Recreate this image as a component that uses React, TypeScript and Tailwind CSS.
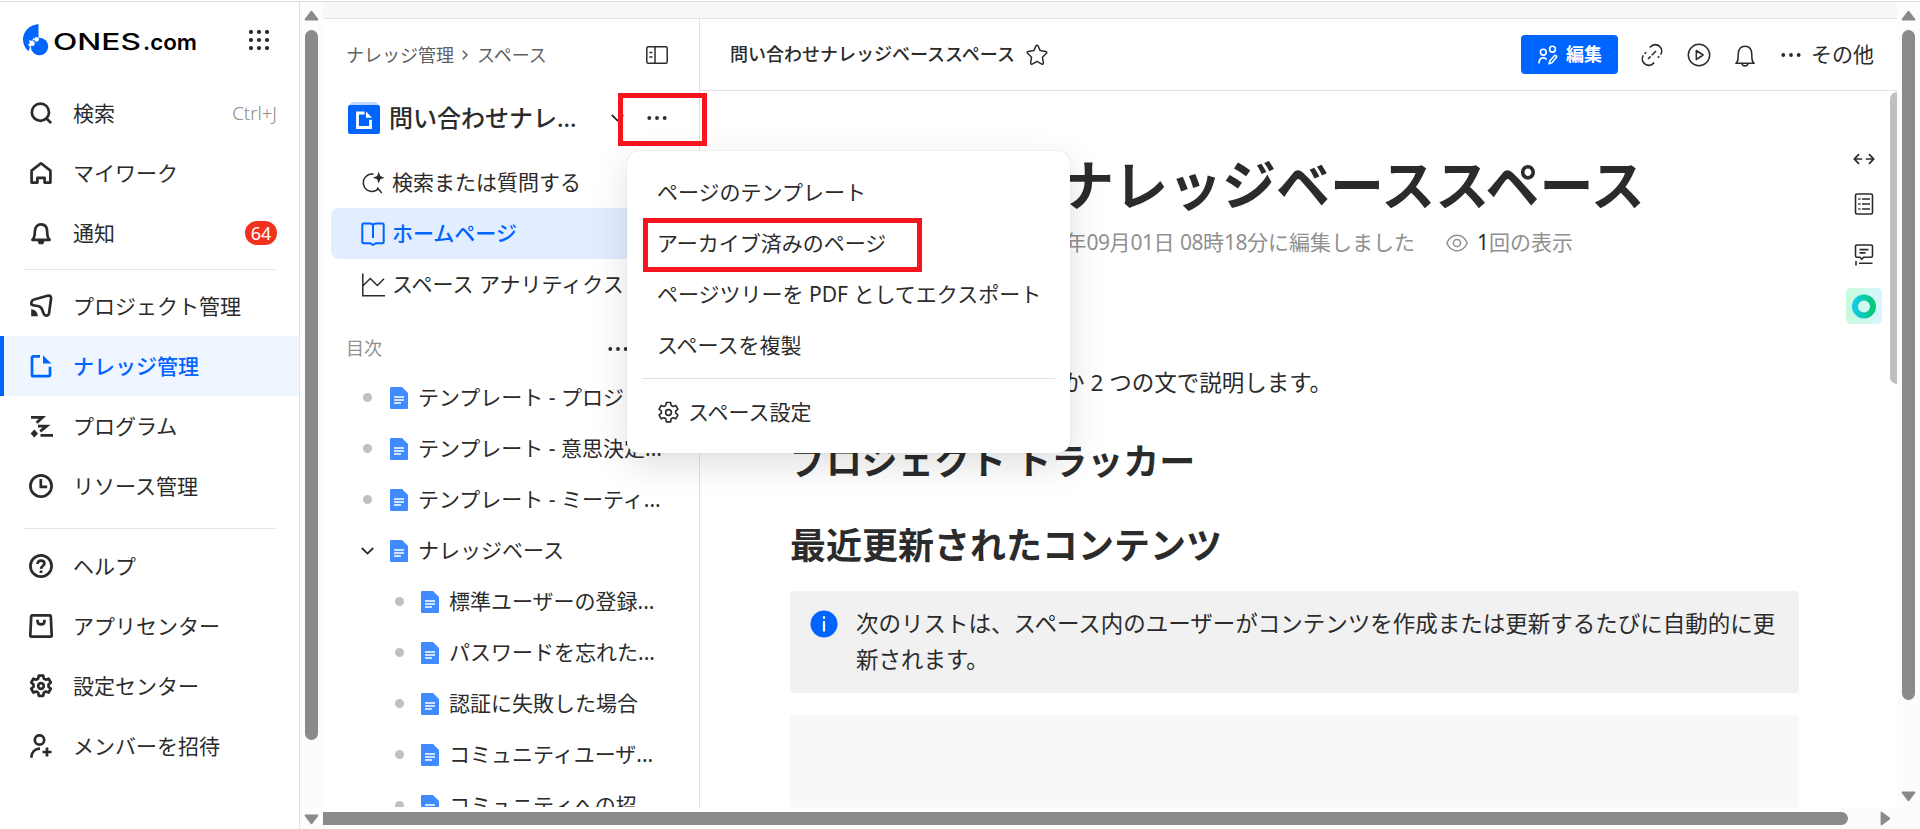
import type { ReactNode } from "react";

type IconProps = { className?: string; children: ReactNode; sw?: number; box?: number };

function Icon({ className = "size-6", children, sw = 2.7, box = 24 }: IconProps) {
  return (
    <svg
      viewBox={`0 0 ${box} ${box}`}
      className={`${className} shrink-0`}
      fill="none"
      stroke="currentColor"
      strokeWidth={sw}
      strokeLinejoin="round"
    >
      {children}
    </svg>
  );
}

const GEAR =
  "M9.8 1.6h4.4l.6 3 1.9 1.1 2.9-1 2.2 3.8-2.3 2v2.2l2.3 2-2.2 3.8-2.9-1-1.9 1.1-.6 3.2H9.8l-.6-3.2-1.9-1.1-2.9 1-2.2-3.8 2.3-2v-2.2l-2.3-2 2.2-3.8 2.9 1 1.9-1.1z";

const icons = {
  search: (
    <Icon>
      <circle cx="11.4" cy="11.2" r="8.6" />
      <path d="M17.3 17.3l4.8 4.8" />
    </Icon>
  ),
  home: (
    <Icon>
      <path d="M2.600 9.600L12 2.300l9.400 7.300V21.600h-5.800v-4.800H8.400v4.800H2.600z" />
    </Icon>
  ),
  bell: (
    <Icon>
      <path d="M3.4 18.8c1.8-1.6 2.4-3.6 2.4-7.8 0-5 2.6-7.6 6.2-7.6s6.2 2.6 6.2 7.6c0 4.200.6 6.200 2.400 7.800z" />
      <path d="M8.200 19.500h7.600l-1.700 3.700h-4.200z" fill="currentColor" stroke="none" />
    </Icon>
  ),
  project: (
    <Icon>
      <path d="M2.400 10.400C2 6.500 3.500 5.800 6 5.300l12.500-3.500c2.800-.6 3.800.8 3.500 3.200L20 19.500c-.6 2.600-3.400 3-5 .7-1.500-2.700-1.500-6-4-7.400-2.300-1.600-6.300-.5-8.600-2.400z" />
      <path d="M2.200 15.200c3.800 0 6.400 3 6.600 7H2.200z" fill="currentColor" stroke="none" />
    </Icon>
  ),
  knowledge: (
    <Icon>
      <path d="M11 2.400H4.200a1.200 1.200 0 0 0-1.200 1.200v17.400a1.200 1.200 0 0 0 1.200 1.200h15.600a1.200 1.200 0 0 0 1.200-1.200V12.800" strokeLinejoin="miter" />
      <path d="M14 1.200l8.300 8.200H14z" fill="currentColor" stroke="none" />
    </Icon>
  ),
  program: (
    <Icon sw={2.800}>
      <path d="M2 3.400h11.500L7.600 8.800M9 12.200h8.600l-6.400 5.200M11.500 21.400H24" strokeLinejoin="miter" />
      <path d="M5.300 15.600l3.700 3.900-3.700 3.900-3.700-3.900z" fill="currentColor" stroke="none" />
    </Icon>
  ),
  clock: (
    <Icon>
      <circle cx="12" cy="12" r="10.600" />
      <path d="M11.800 5v7.800h6.400" strokeLinejoin="miter" />
    </Icon>
  ),
  help: (
    <Icon>
      <circle cx="12" cy="12" r="10.600" />
      <path d="M8.600 10c0-2.200 1.400-3.400 3.400-3.400s3.400 1.200 3.400 3c0 2.400-3.200 2.400-3.400 5.200M12 16.500v2.600" />
    </Icon>
  ),
  apps: (
    <Icon>
      <path d="M3.200 1.400h17.600a1 1 0 0 1 1 1l.9 19.200a1 1 0 0 1-1 1H2.300a1 1 0 0 1-1-1l.9-19.200a1 1 0 0 1 1-1z" />
      <path d="M8.600 5.800v1.400c0 4.200 6.800 4.200 6.800 0V5.800" />
    </Icon>
  ),
  settings: (
    <Icon>
      <path d={GEAR} />
      <circle cx="12" cy="12" r="2.800" />
    </Icon>
  ),
  invite: (
    <Icon>
      <circle cx="10.500" cy="6" r="4.700" />
      <path d="M2.400 23.800c0-5 3-9 8.600-9.200M13.500 18h9M18 13.500v9" />
    </Icon>
  ),
};

type NavItem = { icon: ReactNode; label: string; active?: boolean; extra?: ReactNode };

function NavRow({ icon, label, active, extra }: NavItem) {
  return (
    <div
      className={
        active
          ? "flex h-[60px] items-center border-l-4 border-[#0064ff] bg-[#f0f6ff] pr-[22px] pl-[25px] font-medium text-[#0064ff]"
          : "flex h-[60px] items-center pr-[22px] pl-[29px] text-[#2b2b2b]"
      }
    >
      {icon}
      <span className="mb-px ml-5 flex-1 whitespace-nowrap text-[21px] leading-[30px]">{label}</span>
      {extra}
    </div>
  );
}

function Logo() {
  return (
    <svg viewBox="0 0 176 34" className="h-[34px] w-[176px]">
      <path
        d="M16.500 2C7 3 1 10 1 17.500c0 4.500 1.800 8.500 5.500 11.700l1.500-4.200-2.200-2.400 2-1.200-.6-3.400 2.900 1.100 1.300-3.400 2 2.300 3.100-1.800z"
        fill="#0064ff"
      />
      <circle cx="17.500" cy="24.500" r="8.700" fill="#0064ff" />
      <circle cx="10.200" cy="21.500" r="2.500" fill="#fff" />
      <circle cx="14.600" cy="17.400" r="2.300" fill="#fff" />
      <text x="31" y="28" fontFamily="Inter" fontWeight="500" fontSize="23" textLength="88" lengthAdjust="spacingAndGlyphs">
        ONES
      </text>
      <text x="121" y="28" fontFamily="Inter" fontWeight="600" fontSize="22" textLength="54" lengthAdjust="spacingAndGlyphs">
        .com
      </text>
    </svg>
  );
}

function Sidebar() {
  const top: NavItem[] = [
    {
      icon: icons.search,
      label: "検索",
      extra: <span className="text-[18.500px] font-light text-[#8a8a8a]">Ctrl+J</span>,
    },
    { icon: icons.home, label: "マイワーク" },
    {
      icon: icons.bell,
      label: "通知",
      extra: (
        <span className="flex h-6 w-8 items-center justify-center rounded-full bg-[#f0321e] text-[18px] leading-none text-white">
          64
        </span>
      ),
    },
  ];
  const middle: NavItem[] = [
    { icon: icons.project, label: "プロジェクト管理" },
    { icon: icons.knowledge, label: "ナレッジ管理", active: true },
    { icon: icons.program, label: "プログラム" },
    { icon: icons.clock, label: "リソース管理" },
  ];
  const bottom: NavItem[] = [
    { icon: icons.help, label: "ヘルプ" },
    { icon: icons.apps, label: "アプリセンター" },
    { icon: icons.settings, label: "設定センター" },
    { icon: icons.invite, label: "メンバーを招待" },
  ];
  return (
    <aside className="flex w-[300px] shrink-0 flex-col border-r border-[#dee1e6]">
      <div className="flex h-[81px] items-start justify-between pt-5 pr-[30px] pl-[22px]">
        <Logo />
        <svg viewBox="0 0 20 20" className="mt-[8px] size-5" fill="#2b2b2b">
          {[2, 10, 18].map((y) => [2, 10, 18].map((x) => <circle key={`${x}-${y}`} cx={x} cy={y} r="2.100" />))}
        </svg>
      </div>
      {top.map((i) => (
        <NavRow key={i.label} {...i} />
      ))}
      <div className="mx-[23px] mt-[6px] mb-[6px] h-px shrink-0 bg-[#e4e6e9]" />
      {middle.map((i) => (
        <NavRow key={i.label} {...i} />
      ))}
      <div className="mx-[23px] mt-3 mb-[7px] h-px shrink-0 bg-[#e4e6e9]" />
      {bottom.map((i) => (
        <NavRow key={i.label} {...i} />
      ))}
    </aside>
  );
}

function Arrow({ className }: { className: string }) {
  return (
    <svg viewBox="0 0 15 11" className={`h-[11px] w-[15px] ${className}`}>
      <path d="M7.500 1.500L13.600 9.600H1.400z" fill="#8a8a8a" stroke="#8a8a8a" strokeWidth="1.600" strokeLinejoin="round" />
    </svg>
  );
}

function DocIcon() {
  return (
    <svg viewBox="0 0 18 22" className="h-[22px] w-[18px] shrink-0">
      <path d="M1 0h11l6 6v15a1 1 0 0 1-1 1H1a1 1 0 0 1-1-1V1a1 1 0 0 1 1-1z" fill="#3f8bff" />
      <path d="M4 10h10M4 13h10M4 16h7" stroke="#fff" strokeWidth="1.300" />
    </svg>
  );
}

function Dots({ className }: { className?: string }) {
  return (
    <svg viewBox="0 0 20 6" className={`h-[6px] w-5 shrink-0 ${className ?? ""}`} fill="#2b2b2b">
      <circle cx="2.300" cy="3" r="1.900" />
      <circle cx="10" cy="3" r="1.900" />
      <circle cx="17.700" cy="3" r="1.900" />
    </svg>
  );
}

function Chevron() {
  return (
    <svg viewBox="0 0 13 8" className="h-2 w-[13px] shrink-0" fill="none" stroke="#2b2b2b" strokeWidth="1.800">
      <path d="M.8 1l5.700 5.600L12.200 1" />
    </svg>
  );
}

const tree = [
  { label: "テンプレート - プロジェ...", depth: 0 },
  { label: "テンプレート - 意思決定...", depth: 0 },
  { label: "テンプレート - ミーティ...", depth: 0 },
  { label: "ナレッジベース", depth: 0, open: true },
  { label: "標準ユーザーの登録...", depth: 1 },
  { label: "パスワードを忘れた...", depth: 1 },
  { label: "認証に失敗した場合", depth: 1 },
  { label: "コミュニティユーザ...", depth: 1 },
  { label: "コミュニティへの招...", depth: 1 },
];

function SpacePanel() {
  return (
    <section className="flex w-[377px] shrink-0 flex-col overflow-hidden border-r border-[#dee1e6]">
      <div className="flex h-[72px] shrink-0 items-center pr-[31px] pl-[23px] text-[18px] text-[#606060]">
        <span>ナレッジ管理</span>
        <svg viewBox="0 0 6 10" className="mr-[9px] ml-2 h-[10px] w-[6px]" fill="none" stroke="#606060" strokeWidth="1.500">
          <path d="M.8.8L5 5 .8 9.200" />
        </svg>
        <span>スペース</span>
        <svg viewBox="0 0 22 18" className="ml-auto h-[18px] w-[22px]" fill="none" stroke="#2b2b2b" strokeWidth="1.500">
          <rect x=".8" y=".8" width="20.400" height="16.400" rx="1.500" />
          <path d="M9 1v16M3.400 6.500h3M3.400 11h3" />
        </svg>
      </div>
      <div className="flex h-[53px] shrink-0 items-center pr-8 pl-[25px] text-[24px] font-medium text-[#2b2b2b]">
        <svg viewBox="0 0 32 32" className="size-8 shrink-0">
          <path d="M4 0h24l3 4H1z" fill="#bcd8ff" />
          <rect y="3" width="32" height="29" rx="2" fill="#0064ff" />
          <path d="M16.500 11H9.500v14.500h13v-7.800" fill="none" stroke="#fff" strokeWidth="2.800" />
          <path d="M18 9.500l6 6.300h-6z" fill="#fff" />
        </svg>
        <span className="ml-[9px] whitespace-nowrap">問い合わせナレ...</span>
        <span className="ml-auto flex items-center gap-[23px]">
          <Chevron />
          <Dots />
        </span>
      </div>
      <div className="mt-[13px] flex shrink-0 flex-col pl-2 text-[21px] text-[#2b2b2b]">
        <div className="flex h-[51px] items-center gap-[7px] pl-[30px]">
          <svg viewBox="0 0 24 24" className="size-6 shrink-0" fill="none" stroke="currentColor" strokeWidth="1.500">
            <path d="M12.500 3.100a8.700 8.700 0 1 0 5.200 14.200M16.200 16.600l4.600 5.400" />
            <path d="M17.700.8l1.600 4.300 4.200 1.600-4.200 1.600-1.600 4.300-1.600-4.300-4.200-1.600 4.200-1.600z" fill="currentColor" stroke="none" />
          </svg>
          <span className="whitespace-nowrap">検索または質問する</span>
        </div>
        <div className="flex h-[51px] items-center gap-[7px] rounded-l-lg bg-[#e2edff] pl-[30px] font-medium text-[#0064ff]">
          <svg viewBox="0 0 24 24" className="size-6 shrink-0" fill="none" stroke="currentColor" strokeWidth="2" strokeLinejoin="round">
            <path d="M2.500 1.500h6.300c1.500 0 2.700.7 3.200 1.700.5-1 1.700-1.700 3.200-1.700h6.300a1.200 1.200 0 0 1 1.200 1.200V20a1.200 1.200 0 0 1-1.200 1.200h-6.500L12 23l-3-1.800H2.500A1.200 1.200 0 0 1 1.300 20V2.700a1.200 1.200 0 0 1 1.200-1.200zM12 3v13" />
          </svg>
          <span className="whitespace-nowrap">ホームページ</span>
        </div>
        <div className="flex h-[51px] items-center gap-[7px] pl-[30px]">
          <svg viewBox="0 0 24 24" className="size-6 shrink-0" fill="none" stroke="currentColor" strokeWidth="1.500">
            <path d="M1.800.5v22.300H24M2 12.800l7.300-7.300 7 7L23 5.800" />
          </svg>
          <span className="whitespace-nowrap">スペース アナリティクス</span>
        </div>
      </div>
      <div className="mt-[13px] flex h-[51px] shrink-0 items-center pr-[71px] pl-[23px] text-[18px] text-[#909090]">
        目次
        <Dots className="ml-auto" />
      </div>
      <div className="-mt-[2px] flex flex-col">
        {tree.map((t) => (
          <div
            key={t.label}
            className={
              t.depth
                ? "flex h-[51px] shrink-0 items-center pl-[66px]"
                : "flex h-[51px] shrink-0 items-center pl-[34px]"
            }
          >
            <span className="flex w-5 justify-center">
              {t.open ? <Chevron /> : <span className="size-[9px] rounded-full bg-[#c0c0c0]" />}
            </span>
            <span className={t.depth ? "ml-[12px] flex" : "ml-[13px] flex"}>
              <DocIcon />
            </span>
            <span className="ml-[10px] whitespace-nowrap text-[21px] text-[#2b2b2b]">{t.label}</span>
          </div>
        ))}
      </div>
    </section>
  );
}

function DocHeader() {
  return (
    <header className="flex h-[72px] shrink-0 items-center border-b border-[#dee1e6] pr-[23px] pl-[30px] text-[#2b2b2b]">
      <span className="text-[18px] font-medium">問い合わせナレッジベーススペース</span>
      <svg viewBox="0 0 24 24" className="ml-[10px] size-6" fill="none" stroke="currentColor" strokeWidth="1.500" strokeLinejoin="round">
        <path d="M12 2.200c.5 0 .8.300 1 .7l2.200 4.700 5.600.8c1 .2 1.300 1.200.6 1.900l-4 3.900 1 5.700c.1 1-.8 1.600-1.600 1.200L12 18.400l-4.800 2.700c-.8.4-1.700-.2-1.600-1.200l1-5.700-4-3.900c-.7-.7-.4-1.700.6-1.900l5.600-.8L11 2.900c.2-.4.5-.7 1-.7z" />
      </svg>
      <button className="ml-auto flex h-[39px] w-[97px] items-center rounded bg-[#0064ff] pl-[17px] text-[18px] font-bold text-white">
        <svg viewBox="0 0 20 20" className="mr-2 size-5" fill="none" stroke="#fff" strokeWidth="1.600">
          <circle cx="5.300" cy="7.200" r="2.900" />
          <circle cx="14.500" cy="4.200" r="2.900" />
          <path d="M1 18.500c0-3.500 1.700-5.600 4.300-5.600 1.500 0 2.700.6 3.400 1.700M11.200 18.600l.5-2.600 4.600-5.300c1.200-1 3 .5 2 1.900l-4.500 5.300z" />
        </svg>
        編集
      </button>
      <svg viewBox="0 0 24 24" className="ml-[22px] size-6" fill="none" stroke="currentColor" strokeWidth="1.600">
        <path d="M9.800 4.400l1.200-1a6.200 6.200 0 0 1 8.800.2 6.200 6.200 0 0 1 .8 8M19.300 13.300l-1.500 1.500M14.200 19.600l-1.200 1a6.200 6.200 0 0 1-8.800-.2 6.200 6.200 0 0 1-.8-8M4.700 10.700l1.500-1.500M8 16l2.600-2.600M11.700 12.300L16 8" />
      </svg>
      <svg viewBox="0 0 24 24" className="ml-[23px] size-6" fill="none" stroke="currentColor" strokeWidth="1.500">
        <circle cx="12" cy="12" r="10.700" />
        <path d="M9.300 7.500l6.800 4.500-6.800 4.500z" strokeLinejoin="round" />
      </svg>
      <svg viewBox="0 0 24 24" className="ml-[22px] size-6" fill="none" stroke="currentColor" strokeWidth="1.500" strokeLinejoin="round">
        <path d="M2.800 20.300c2.300-1.500 2.400-3.600 2.400-8.800 0-5.500 2.800-8.300 6.800-8.300s6.800 2.800 6.800 8.300c0 5.200.1 7.300 2.400 8.800zM9 20.500c.2 3.200 5.800 3.200 6 0" />
      </svg>
      <Dots className="ml-6" />
      <span className="ml-[10px] text-[21px] whitespace-nowrap">その他</span>
    </header>
  );
}

function ToolRail() {
  return (
    <div className="flex w-9 flex-col items-center pt-[56px] text-[#2b2b2b]">
      <svg viewBox="0 0 22 24" className="h-6 w-[22px]" fill="none" stroke="currentColor" strokeWidth="1.700">
        <path d="M6 7.200L1.300 12 6 16.800M1.500 12h7.700M16 7.200l4.700 4.800-4.700 4.800M20.500 12h-7.700" />
      </svg>
      <svg viewBox="0 0 20 22" className="mt-[22px] h-[22px] w-5" fill="none" stroke="currentColor" strokeWidth="1.600">
        <rect x="1.500" y="1" width="17" height="20" rx="1.500" />
        <path d="M4.300 6h2.200M8 6h8M4.300 11h2.200M8 11h8M4.300 16h2.200M8 16h8" />
      </svg>
      <svg viewBox="0 0 20 22" className="mt-[29px] h-[22px] w-5" fill="none" stroke="currentColor" strokeWidth="1.600">
        <path d="M3 1h14a1.500 1.500 0 0 1 1.500 1.500v9.300a1.500 1.500 0 0 1-1.500 1.500H9.500L7.800 15.200 6 13.300H3a1.500 1.500 0 0 1-1.500-1.500V2.500A1.500 1.500 0 0 1 3 1zM5.500 5.600h9M5.500 8.900h6M2 17v4.500M5 19.200h13.500" />
      </svg>
      <svg viewBox="0 0 36 36" className="mt-[22px] size-9">
        <defs>
          <linearGradient id="tile">
            <stop stopColor="#c8fbdc" />
            <stop offset="1" stopColor="#d6f5ff" />
          </linearGradient>
          <linearGradient id="ring">
            <stop stopColor="#12cbe0" />
            <stop offset="1" stopColor="#08c878" />
          </linearGradient>
        </defs>
        <rect width="36" height="36" rx="5" fill="url(#tile)" />
        <circle cx="18" cy="18.500" r="9" fill="none" stroke="url(#ring)" strokeWidth="6" />
      </svg>
    </div>
  );
}

function Document() {
  return (
    <div className="flex min-h-0 flex-1">
      <article className="ml-[90px] flex w-[1009px] shrink-0 flex-col text-[#2b2b2b]">
        <h1 className="mt-[54px] text-[54px] leading-[80px] font-bold whitespace-nowrap">
          問い合わせナレッジベーススペース
        </h1>
        <div className="mt-[3px] flex h-[30px] items-center text-[21px] whitespace-nowrap text-[#909090]">
          <span className="w-[625px] text-right">
            2025年<span className="tracking-[-0.5px]">09</span>月<span className="tracking-[-0.5px]">01</span>日{" "}
            <span className="tracking-[-0.5px]">08</span>時<span className="tracking-[-0.5px]">18</span>分に編集しました
          </span>
          <svg viewBox="0 0 22 20" className="ml-[31px] h-5 w-[22px]" fill="none" stroke="currentColor" strokeWidth="1.500">
            <path d="M.8 10C3 5 6.800 2.200 11 2.200S19 5 21.200 10C19 15 15.200 17.800 11 17.800S3 15 .8 10z" />
            <circle cx="11" cy="10" r="3.600" />
          </svg>
          <span className="ml-[9px]">
            <span className="text-[#2b2b2b]">1</span>回の表示
          </span>
        </div>
        <p className="mt-[107px] w-[539px] text-right text-[22.500px] leading-9 whitespace-nowrap">
          プロジェクトの概要を 1 つか 2 つの文で説明します。
        </p>
        <h2 className="mt-[34px] text-[36px] leading-[54px] font-bold">プロジェクト トラッカー</h2>
        <h2 className="mt-[30px] text-[36px] leading-[54px] font-bold">最近更新されたコンテンツ</h2>
        <div className="mt-[18px] flex h-[102px] shrink-0 rounded bg-[#f1f1f1] pt-[15px] pl-5">
          <svg viewBox="0 0 28 28" className="mt-1 size-7 shrink-0">
            <circle cx="14" cy="14" r="13.500" fill="#0064ff" />
            <path d="M14 6.200v2.600M14 11v10.500" stroke="#fff" strokeWidth="2.200" />
          </svg>
          <p className="ml-[18px] w-[925px] text-[22.500px] leading-9">
            次のリストは、スペース内のユーザーがコンテンツを作成または更新するたびに自動的に更新されます。
          </p>
        </div>
        <div className="mt-[22px] min-h-0 flex-1 rounded-t bg-[#f7f8fa]" />
      </article>
      <div className="ml-auto flex">
        <ToolRail />
        <div className="mt-px ml-2 h-[292px] w-[7px] rounded-l-lg bg-[#bfbfc0]" />
      </div>
    </div>
  );
}

function SpaceMenu() {
  return (
    <div className="absolute top-[151px] left-[627px] flex h-[302px] w-[443px] flex-col rounded-xl bg-white pt-4 text-[21px] text-[#2b2b2b] shadow-[0_0_1px_rgba(0,0,0,0.25),0_12px_36px_rgba(0,0,0,0.13)]">
      {["ページのテンプレート", "アーカイブ済みのページ", "ページツリーを PDF としてエクスポート", "スペースを複製"].map((l) => (
        <div key={l} className="flex h-[51px] items-center pl-[30px] whitespace-nowrap">
          {l}
        </div>
      ))}
      <div className="mx-[15px] mt-[7px] mb-2 h-px shrink-0 bg-[#dee1e6]" />
      <div className="flex h-[51px] items-center pl-[30px]">
        <Icon className="size-[23px]" sw={1.700}>
          <path d={GEAR} />
          <circle cx="12" cy="12" r="3" />
        </Icon>
        <span className="ml-[8px]">スペース設定</span>
      </div>
    </div>
  );
}

export default function App() {
  return (
    <div
      lang="ja"
      className="relative flex h-[829px] w-[1920px] flex-col overflow-hidden bg-white font-['Noto_Sans','Noto_Sans_CJK_JP',sans-serif] pt-px"
    >
      <div className="h-px shrink-0 bg-[#dcdfe0]" />
      <div className="flex min-h-0 flex-1">
        <Sidebar />
        <div className="flex w-[23px] shrink-0 flex-col items-center bg-[#fcfcfc] pt-2">
          <Arrow className="" />
          <div className="mt-[9px] h-[710px] w-[13px] shrink-0 rounded-full bg-[#8a8a8a]" />
          <Arrow className="mt-auto mb-[4px] rotate-180" />
        </div>
        <div className="flex min-w-0 flex-1 flex-col">
          <div className="flex min-h-0 flex-1">
            <div className="flex min-w-0 flex-1 flex-col">
              <div className="h-[17px] shrink-0 border-b border-[#dee1e6] bg-[#f6f7f9]" />
              <div className="flex min-h-0 flex-1">
                <SpacePanel />
                <main className="flex min-w-0 flex-1 flex-col">
                  <DocHeader />
                  <Document />
                </main>
              </div>
            </div>
            <div className="flex w-[23px] shrink-0 flex-col items-center bg-[#fcfcfc] pt-2">
              <Arrow className="" />
              <div className="mt-[9px] h-[670px] w-[13px] shrink-0 rounded-full bg-[#8a8a8a]" />
              <Arrow className="mt-auto mb-[5px] rotate-180" />
            </div>
          </div>
          <div className="flex h-[22px] shrink-0 items-center bg-[#fcfcfc]">
            <div className="h-[13px] w-[1525px] rounded-r-full bg-[#8a8a8a]" />
            <Arrow className="ml-[30px] rotate-90" />
          </div>
        </div>
      </div>
      <SpaceMenu />
      <div className="absolute top-[93px] left-[618px] h-[53px] w-[89px] border-[5px] border-[#f8141e]" />
      <div className="absolute top-[218px] left-[643px] h-[54px] w-[279px] border-[5px] border-[#f8141e]" />
    </div>
  );
}
